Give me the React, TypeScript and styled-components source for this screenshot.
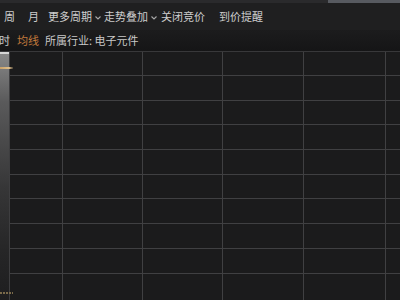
import React from 'react';
import styled, { createGlobalStyle } from 'styled-components';

const GlobalStyle = createGlobalStyle`
  html, body {
    margin: 0;
    padding: 0;
    background: #1a1a1b;
  }
  body {
    font-family: "Noto Sans CJK SC", "Noto Sans", sans-serif;
  }
`;

const Page = styled.div`
  width: 400px;
  height: 300px;
  overflow: hidden;
  display: flex;
  flex-direction: column;
  background: #1a1a1b;
`;

const TopStrip = styled.div`
  height: 3px;
  display: flex;
  background: #2a2a2c;
`;

const TopStripTab = styled.div`
  margin-left: auto;
  width: 72px;
  background: #575a60;
`;

const Toolbar = styled.div`
  height: 27px;
  display: flex;
  align-items: center;
  padding-left: 4px;
  background: #1f1f20;
  font-size: 11px;
  color: #cdcdcd;
`;

const ToolItem = styled.div<{ $ml?: number }>`
  display: flex;
  align-items: center;
  gap: 3px;
  margin-left: ${({ $ml }) => $ml ?? 0}px;
  white-space: nowrap;
  line-height: 1;
`;

const Chevron = styled.svg`
  width: 6px;
  height: 4px;
  margin-top: 2px;
`;

const SubBar = styled.div`
  height: 21px;
  display: flex;
  align-items: center;
  margin-left: -1px;
  background: linear-gradient(#1c1c1d, #151516);
  font-size: 11px;
  color: #c9c9c9;
`;

const SubItem = styled.span<{ $ml?: number; $accent?: boolean }>`
  margin-left: ${({ $ml }) => $ml ?? 0}px;
  color: ${({ $accent }) => ($accent ? '#c27a3c' : '#c9c9c9')};
  white-space: nowrap;
  line-height: 1;
`;

const ChartArea = styled.div`
  flex: 1;
  display: flex;
  border-top: 1px solid #38383a;
`;

const LeftAxis = styled.div`
  position: relative;
  width: 9px;
  border-right: 1px solid #3e3e40;
  background: linear-gradient(#8a8a8a 0%, #5a5a5b 20%, #363637 55%, #262627 80%, #1e1e1f 100%);
`;

const AxisTop = styled.div`
  height: 2px;
  background: #d6d6d6;
`;

const MaLine = styled.div`
  position: absolute;
  left: 0;
  top: 15px;
  width: 13px;
  height: 2px;
  background: linear-gradient(90deg, #c9a068, #e2c08a 70%, rgba(226, 192, 138, 0.2));
  z-index: 2;
`;

const BottomDots = styled.div`
  position: absolute;
  left: 0;
  bottom: 6px;
  width: 13px;
  height: 2px;
  background: repeating-linear-gradient(90deg, #7a6a4a 0 2px, transparent 2px 3px);
  z-index: 2;
`;

const Grid = styled.div`
  flex: 1;
  display: grid;
  grid-template-columns: 52px 79px 79px 80px 81px 1fr;
  grid-template-rows: 23px repeat(8, 23.7px) 1fr;
  gap: 1px;
  background: #404042;
`;

const Cell = styled.div`
  background: #1b1b1c;
`;

const toolItems = [
  { label: '周', ml: 0 },
  { label: '月', ml: 13 },
  { label: '更多周期', ml: 9, menu: true },
  { label: '走势叠加', ml: 3, menu: true },
  { label: '关闭竞价', ml: 4 },
  { label: '到价提醒', ml: 14 },
];

export default function App() {
  const cells = Array.from({ length: 60 });
  return (
    <>
      <GlobalStyle />
      <Page>
        <TopStrip>
          <TopStripTab />
        </TopStrip>
        <Toolbar>
          {toolItems.map((t) => (
            <ToolItem key={t.label} $ml={t.ml}>
              {t.label}
              {t.menu && (
                <Chevron viewBox="0 0 6 4">
                  <path d="M0.5 0.5 L3 3 L5.5 0.5" fill="none" stroke="#a8a8a8" strokeWidth="1.1" />
                </Chevron>
              )}
            </ToolItem>
          ))}
        </Toolbar>
        <SubBar>
          <SubItem>时</SubItem>
          <SubItem $ml={7} $accent>均线</SubItem>
          <SubItem $ml={6}>所属行业: 电子元件</SubItem>
        </SubBar>
        <ChartArea>
          <LeftAxis>
            <AxisTop />
            <MaLine />
            <BottomDots />
          </LeftAxis>
          <Grid>
            {cells.map((_, i) => (
              <Cell key={i} />
            ))}
          </Grid>
        </ChartArea>
      </Page>
    </>
  );
}
